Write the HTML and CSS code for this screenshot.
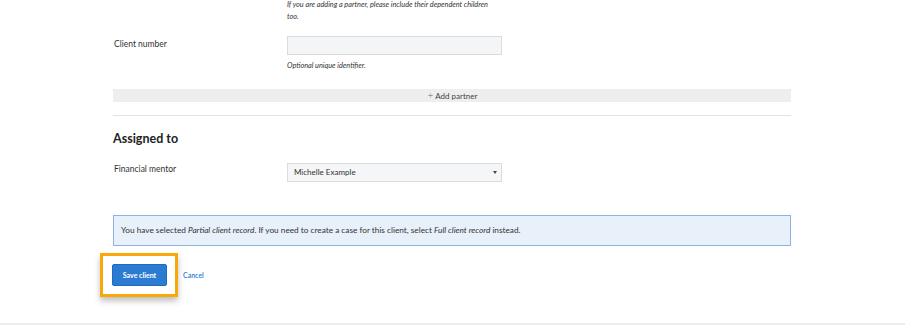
FILE: index.html
```html
<!DOCTYPE html>
<html>
<head>
<meta charset="utf-8">
<link rel="stylesheet" href="styles.css">
</head>
<body>
<div class="page">
  <div class="form">
    <div class="row first">
      <div class="label"></div>
      <div class="field">
        <p class="help">If you are adding a partner, please include their dependent children<br>too.</p>
      </div>
    </div>
    <div class="row client">
      <div class="label">Client number</div>
      <div class="field">
        <div class="input"></div>
        <p class="help">Optional unique identifier.</p>
      </div>
    </div>
    <div class="add-partner"><span class="plus">+</span> Add partner</div>
    <div class="divider"></div>
    <h2 class="heading">Assigned to</h2>
    <div class="row mentor">
      <div class="label">Financial mentor</div>
      <div class="field">
        <div class="select"><span>Michelle Example</span><span class="caret"></span></div>
      </div>
    </div>
    <div class="info"><p>You have selected <em>Partial client record</em>. If you need to create a case for this client, select <em>Full client record</em> instead.</p></div>
    <div class="actions">
      <div class="highlight"><button class="btn">Save client</button></div>
      <a class="cancel">Cancel</a>
    </div>
  </div>
  <div class="footer-line"></div>
</div>
</body>
</html>
```
FILE: styles.css
```css
* { box-sizing: border-box; }
html, body { margin: 0; padding: 0; background: #fff; }
body { font-family: "Lato", "Open Sans", sans-serif; color: #333; width: 905px; height: 325px; overflow: hidden; }
.page { display: flex; flex-direction: column; height: 325px; }
.form { width: 678px; margin-left: 113px; flex: 1; }
.row { display: flex; }
.label { width: 174px; flex: none; font-size: 8.5px; color: #333; padding-left: 1px; }
.field { width: 215px; }
.help { margin: 0; font-size: 7.3px; font-style: italic; line-height: 11.5px; color: #333; }
.first .help { margin-top: -1px; }
.client { margin-top: 14px; }
.client .label { padding-top: 3px; }
.input { height: 19px; background: #f4f5f7; border: 1px solid #dcdcdc; }
.client .help { margin-top: 5px; }
.add-partner { margin-top: 17px; height: 13px; background: #eeeeee; font-size: 8px; color: #444; text-align: center; line-height: 13px; padding-left: 1px; }
.plus { font-size: 10px; font-weight: 300; color: #666; }
.divider { margin-top: 13px; height: 1px; background: #e3e3e3; }
.heading { margin: 15px 0 0; font-size: 12.5px; font-weight: 700; color: #222; line-height: 16px; }
.mentor { margin-top: 16px; }
.mentor .label { padding-top: 1px; }
.select { height: 19px; background: #f5f6f8; border: 1px solid #dcdcdc; display: flex; align-items: center; justify-content: space-between; padding: 0 4px 0 6px; font-size: 8px; color: #333; }
.caret { width: 0; height: 0; border-left: 2.5px solid transparent; border-right: 2.5px solid transparent; border-top: 3px solid #444; }
.info { margin-top: 33px; height: 31px; background: #e8f0fa; border: 1px solid #8db3e2; font-size: 8.25px; color: #333; padding: 0 7px; display: flex; align-items: center; }
.info p { margin: 0; }
.actions { display: flex; align-items: center; margin-top: 7px; margin-left: -13px; }
.highlight { border: 3px solid #f7a90a; padding: 8px 8px 8px 9px; box-shadow: 0 4px 6px rgba(0,0,0,0.25); }
.btn { display: block; width: 55px; height: 22px; background: #2b7bd2; color: #fff; border: 1px solid #1f6bbf; border-radius: 2px; font-family: inherit; font-size: 7px; font-weight: 700; padding: 0; }
.cancel { margin-left: 5px; font-size: 7px; color: #2b7bd2; font-weight: 600; }
.footer-line { height: 2px; background: #ededed; }
```
